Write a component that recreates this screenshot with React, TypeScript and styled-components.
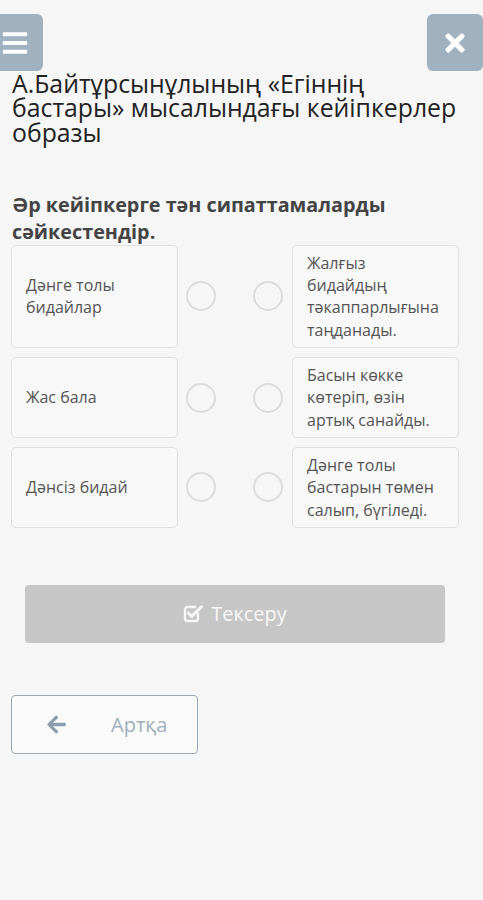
import React from "react";
import styled, { createGlobalStyle } from "styled-components";
import { FaBars, FaTimes, FaArrowLeft } from "react-icons/fa";

const Global = createGlobalStyle`
  html, body { margin: 0; padding: 0; background: #f6f6f6; }
  body { font-family: "Open Sans", "Noto Sans", sans-serif; overflow-x: hidden; }
  * { box-sizing: border-box; }
`;

const Page = styled.div`
  width: 483px;
  min-height: 900px;
  background: #f6f6f6;
  overflow: hidden;
`;

const Header = styled.div`
  display: flex;
  justify-content: space-between;
  padding-top: 14px;
`;

const IconButton = styled.button<{ $shift?: number }>`
  width: 56px;
  height: 57px;
  border: none;
  border-radius: 6px;
  background: #a0b1bf;
  color: #fff;
  display: flex;
  align-items: center;
  justify-content: center;
  margin-left: ${(p) => p.$shift ?? 0}px;
  padding: 0;
`;

const Title = styled.h1`
  margin: 0;
  padding: 0 20px 0 12px;
  font-size: 24.8px;
  line-height: 24.3px;
  font-weight: 400;
  color: #222;
`;

const Subtitle = styled.h2`
  margin: 47px 0 0;
  padding: 0 12px;
  font-size: 19.8px;
  line-height: 27px;
  font-weight: 700;
  color: #444;
`;

const Rows = styled.div`
  display: flex;
  flex-direction: column;
  gap: 9px;
  padding-left: 11px;
`;

const Row = styled.div`
  display: flex;
  align-items: center;
`;

const Card = styled.div<{ $align: "left" | "right" }>`
  width: 167px;
  align-self: stretch;
  min-height: 80px;
  border: 1px solid #e0e0e0;
  border-radius: 5px;
  background: #f8f8f8;
  padding: 6px 14px;
  display: flex;
  align-items: center;
  font-size: 16px;
  line-height: 22.3px;
  color: #555;
`;

const Dots = styled.div`
  display: flex;
  gap: 37px;
  margin: 0 9px 0 8px;
`;

const Dot = styled.span`
  width: 30px;
  height: 30px;
  border-radius: 50%;
  border: 2px solid #dcdcdc;
`;

const CheckButton = styled.button`
  margin: 57px 0 0 25px;
  width: 420px;
  height: 58px;
  border: none;
  border-radius: 4px;
  background: #c6c6c6;
  color: #f7f7f7;
  font-family: "Open Sans", sans-serif;
  font-size: 20px;
  display: flex;
  align-items: center;
  justify-content: center;
  gap: 7px;
  padding: 0;
`;

const BackButton = styled.button`
  margin: 52px 0 0 11px;
  width: 187px;
  height: 59px;
  border: 1px solid #9aa9b6;
  border-radius: 4px;
  background: #fafafa;
  color: #9fb0bd;
  font-family: "Open Sans", sans-serif;
  font-size: 20px;
  display: flex;
  align-items: center;
  padding: 0 0 0 34px;
  gap: 44px;
  svg { color: #8c9eae; }
`;

const CheckIcon = () => (
  <svg width="21" height="19" viewBox="0 0 21 19" fill="none">
    <path
      d="M15 9.5V14.5a2.5 2.5 0 0 1-2.5 2.5H4.5A2.5 2.5 0 0 1 2 14.5V5.5A2.5 2.5 0 0 1 4.5 3H12"
      stroke="currentColor"
      strokeWidth="2.4"
      strokeLinecap="round"
    />
    <path
      d="M5.5 9.2l3.2 3.2L18.5 2.8"
      stroke="currentColor"
      strokeWidth="3"
      strokeLinecap="round"
      strokeLinejoin="round"
    />
  </svg>
);

const rows = [
  { left: "Дәнге толы бидайлар", right: "Жалғыз бидайдың тәкаппарлығына таңданады." },
  { left: "Жас бала", right: "Басын көкке көтеріп, өзін артық санайды." },
  { left: "Дәнсіз бидай", right: "Дәнге толы бастарын төмен салып, бүгіледі." },
];

export default function App() {
  return (
    <Page>
      <Global />
      <Header>
        <IconButton $shift={-13}>
          <FaBars size={28} />
        </IconButton>
        <IconButton>
          <FaTimes size={28} />
        </IconButton>
      </Header>
      <Title>А.Байтұрсынұлының «Егіннің бастары» мысалындағы кейіпкерлер образы</Title>
      <Subtitle>Әр кейіпкерге тән сипаттамаларды сәйкестендір.</Subtitle>
      <Rows>
        {rows.map((r) => (
          <Row key={r.left}>
            <Card $align="left">{r.left}</Card>
            <Dots>
              <Dot />
              <Dot />
            </Dots>
            <Card $align="right">{r.right}</Card>
          </Row>
        ))}
      </Rows>
      <CheckButton>
        <CheckIcon />
        Тексеру
      </CheckButton>
      <BackButton>
        <FaArrowLeft size={21} />
        Артқа
      </BackButton>
    </Page>
  );
}
